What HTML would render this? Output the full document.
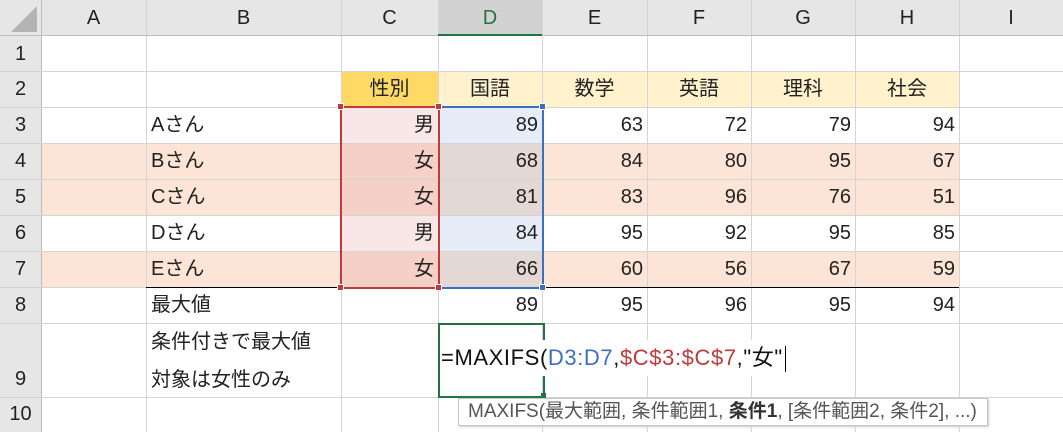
<!DOCTYPE html><html><head><meta charset="utf-8"><style>
body{margin:0;width:1063px;height:432px;overflow:hidden;background:#fff;font-family:"Liberation Sans","Noto Sans CJK JP",sans-serif;font-size:20px;color:#222;position:relative}
div{position:absolute;box-sizing:border-box}
.v{top:0;height:432px;width:1px;background:#d4d4d4}
.h{left:0;width:1063px;height:1px;background:#d4d4d4}
.hd{background:#e6e6e6;color:#333;text-align:center}
.c{height:36px;line-height:36px}
.r{text-align:right;padding-right:4px}
.l{padding-left:5px}
.ct{text-align:center}
</style></head><body>
<div class="hd" style="left:0;top:0;width:1063px;height:36px"></div>
<div class="hd" style="left:0;top:0;width:41px;height:432px"></div>
<div style="left:438px;top:0;width:104px;height:36px;background:#d2d2d2"></div>
<div style="left:341px;top:71px;width:97px;height:36px;background:#ffd966"></div>
<div style="left:438px;top:71px;width:521px;height:36px;background:#fff2cc"></div>
<div style="left:41px;top:143px;width:918px;height:72px;background:#fce4d6"></div>
<div style="left:41px;top:251px;width:918px;height:36px;background:#fce4d6"></div>
<div style="left:341px;top:107px;width:97px;height:36px;background:#f9e7e7"></div>
<div style="left:341px;top:215px;width:97px;height:36px;background:#f9e7e7"></div>
<div style="left:341px;top:143px;width:97px;height:72px;background:#f5d0c6"></div>
<div style="left:341px;top:251px;width:97px;height:36px;background:#f5d0c6"></div>
<div style="left:438px;top:107px;width:104px;height:36px;background:#e6edf8"></div>
<div style="left:438px;top:215px;width:104px;height:36px;background:#e6edf8"></div>
<div style="left:438px;top:143px;width:104px;height:72px;background:#e4d8d4"></div>
<div style="left:438px;top:251px;width:104px;height:36px;background:#e4d8d4"></div>
<div class="v" style="left:41px;background:#bdbdbd"></div><div class="v" style="left:146px"></div><div class="v" style="left:341px"></div><div class="v" style="left:438px"></div><div class="v" style="left:542px"></div><div class="v" style="left:647px"></div><div class="v" style="left:751px"></div><div class="v" style="left:855px"></div><div class="v" style="left:959px"></div>
<div class="h" style="top:35px;background:#bdbdbd"></div><div class="h" style="top:71px"></div><div class="h" style="top:107px"></div><div class="h" style="top:143px"></div><div class="h" style="top:179px"></div><div class="h" style="top:215px"></div><div class="h" style="top:251px"></div><div class="h" style="top:287px"></div><div class="h" style="top:323px"></div><div class="h" style="top:397px"></div>
<div style="left:146px;top:287px;width:813px;height:1px;background:#000"></div>
<div style="left:438px;top:34px;width:104px;height:2px;background:#217346"></div>
<svg style="position:absolute;left:10px;top:5px" width="28" height="28"><polygon points="27,1 27,27 1,27" fill="#b4b4b4"/></svg>
<div class="c ct" style="left:41px;width:105px;top:0">A</div>
<div class="c ct" style="left:146px;width:195px;top:0">B</div>
<div class="c ct" style="left:341px;width:97px;top:0">C</div>
<div class="c ct" style="left:438px;width:104px;top:0;color:#217346">D</div>
<div class="c ct" style="left:542px;width:105px;top:0">E</div>
<div class="c ct" style="left:647px;width:104px;top:0">F</div>
<div class="c ct" style="left:751px;width:104px;top:0">G</div>
<div class="c ct" style="left:855px;width:104px;top:0">H</div>
<div class="c ct" style="left:959px;width:104px;top:0">I</div>
<div class="c ct" style="left:0;width:41px;top:36px">1</div>
<div class="c ct" style="left:0;width:41px;top:71px">2</div>
<div class="c ct" style="left:0;width:41px;top:107px">3</div>
<div class="c ct" style="left:0;width:41px;top:143px">4</div>
<div class="c ct" style="left:0;width:41px;top:179px">5</div>
<div class="c ct" style="left:0;width:41px;top:215px">6</div>
<div class="c ct" style="left:0;width:41px;top:251px">7</div>
<div class="c ct" style="left:0;width:41px;top:287px">8</div>
<div class="c ct" style="left:0;width:41px;top:361px">9</div>
<div class="c ct" style="left:0;width:41px;top:396px">10</div>
<div class="c ct" style="left:341px;width:97px;top:71px">性別</div>
<div class="c ct" style="left:438px;width:104px;top:71px">国語</div>
<div class="c ct" style="left:542px;width:105px;top:71px">数学</div>
<div class="c ct" style="left:647px;width:104px;top:71px">英語</div>
<div class="c ct" style="left:751px;width:104px;top:71px">理科</div>
<div class="c ct" style="left:855px;width:104px;top:71px">社会</div>
<div class="c l" style="left:146px;top:107px">Aさん</div>
<div class="c l" style="left:146px;top:143px">Bさん</div>
<div class="c l" style="left:146px;top:179px">Cさん</div>
<div class="c l" style="left:146px;top:215px">Dさん</div>
<div class="c l" style="left:146px;top:251px">Eさん</div>
<div class="c l" style="left:146px;top:287px">最大値</div>
<div class="c r" style="left:341px;width:97px;top:107px">男</div>
<div class="c r" style="left:341px;width:97px;top:143px">女</div>
<div class="c r" style="left:341px;width:97px;top:179px">女</div>
<div class="c r" style="left:341px;width:97px;top:215px">男</div>
<div class="c r" style="left:341px;width:97px;top:251px">女</div>
<div style="left:438px;top:107px;width:104px">
<div class="c r" style="position:relative;width:104px">89</div><div class="c r" style="position:relative;width:104px">68</div><div class="c r" style="position:relative;width:104px">81</div><div class="c r" style="position:relative;width:104px">84</div><div class="c r" style="position:relative;width:104px">66</div><div class="c r" style="position:relative;width:104px">89</div></div>
<div style="left:542px;top:107px;width:105px">
<div class="c r" style="position:relative">63</div><div class="c r" style="position:relative">84</div><div class="c r" style="position:relative">83</div><div class="c r" style="position:relative">95</div><div class="c r" style="position:relative">60</div><div class="c r" style="position:relative">95</div></div>
<div style="left:647px;top:107px;width:104px">
<div class="c r" style="position:relative">72</div><div class="c r" style="position:relative">80</div><div class="c r" style="position:relative">96</div><div class="c r" style="position:relative">92</div><div class="c r" style="position:relative">56</div><div class="c r" style="position:relative">96</div></div>
<div style="left:751px;top:107px;width:104px">
<div class="c r" style="position:relative">79</div><div class="c r" style="position:relative">95</div><div class="c r" style="position:relative">76</div><div class="c r" style="position:relative">95</div><div class="c r" style="position:relative">67</div><div class="c r" style="position:relative">95</div></div>
<div style="left:855px;top:107px;width:104px">
<div class="c r" style="position:relative">94</div><div class="c r" style="position:relative">67</div><div class="c r" style="position:relative">51</div><div class="c r" style="position:relative">85</div><div class="c r" style="position:relative">59</div><div class="c r" style="position:relative">94</div></div>
<div style="left:340px;top:106px;width:100px;height:183px;border:2px solid #c0393b"></div>
<div style="left:438px;top:106px;width:106px;height:183px;border:2px solid #3a6fc4;border-left:none"></div>
<div style="left:337px;top:103px;width:7px;height:7px;background:#c0393b;border:1px solid #fff"></div>
<div style="left:435px;top:103px;width:7px;height:7px;background:#c0393b;border:1px solid #fff"></div>
<div style="left:337px;top:284px;width:7px;height:7px;background:#c0393b;border:1px solid #fff"></div>
<div style="left:435px;top:284px;width:7px;height:7px;background:#c0393b;border:1px solid #fff"></div>
<div style="left:539px;top:103px;width:7px;height:7px;background:#3a6fc4;border:1px solid #fff"></div>
<div style="left:539px;top:284px;width:7px;height:7px;background:#3a6fc4;border:1px solid #fff"></div>
<div class="l" style="left:146px;top:323px;line-height:38px">条件付きで最大値<br>対象は女性のみ</div>
<div style="left:438px;top:323px;width:107px;height:75px;border:2px solid #217346;background:transparent"></div>
<div style="left:541px;top:393px;width:5px;height:5px;background:#217346"></div>
<div style="left:441px;top:340px;line-height:36px;font-size:22px;letter-spacing:0.6px;white-space:nowrap;background:#fff;color:#111">=MAXIFS(<span style="color:#3a6fc4">D3:D7</span>,<span style="color:#c0393b">$C$3:$C$7</span>,"女"<span style="display:inline-block;width:1px;height:26px;background:#000;vertical-align:middle;margin-left:2px"></span></div>
<div style="left:458px;top:398px;width:530px;height:28px;border:1px solid #c6c6c6;background:#fff;box-shadow:1px 1px 2px #ccc;font-size:19px;line-height:26px;padding-left:9px;color:#555;white-space:nowrap">MAXIFS(最大範囲, 条件範囲1, <b style="color:#333">条件1</b>, [条件範囲2, 条件2], ...)</div>
</body></html>
